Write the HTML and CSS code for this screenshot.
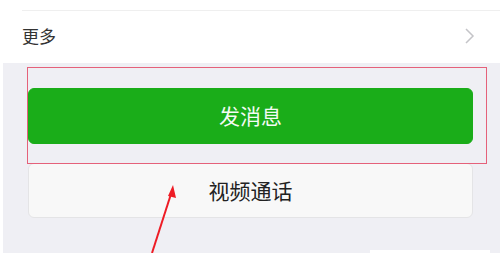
FILE: index.html
```html
<!DOCTYPE html>
<html lang="zh-CN">
<head>
    <meta charset="UTF-8">
    <meta name="viewport" content="width=device-width, initial-scale=1.0">
    <title>更多</title>
    <link rel="stylesheet" href="styles.css">
</head>
<body>
    <div class="page">
        <div class="list">
            <div class="list-top"></div>
            <div class="list-item">
                <span class="item-label">更多</span>
                <svg class="chevron" width="12" height="18" viewBox="0 0 12 18">
                    <polyline points="2,2 9,9 2,16" fill="none" stroke="#c4c4c8" stroke-width="1.5"/>
                </svg>
            </div>
        </div>

        <div class="actions">
            <button class="btn btn-primary">发消息</button>
            <button class="btn btn-default">视频通话</button>
            <div class="bottom-tab"></div>
        </div>

        <div class="highlight"></div>
        <svg class="arrow" width="500" height="253" viewBox="0 0 500 253">
            <line x1="152" y1="253" x2="171" y2="194" stroke="#ee1c25" stroke-width="2"/>
            <polygon points="173,185 176,198 168,196" fill="#ee1c25"/>
        </svg>
    </div>
</body>
</html>
```

FILE: styles.css
```css
* {
    margin: 0;
    padding: 0;
    box-sizing: border-box;
}

body {
    font-family: 'Noto Sans CJK SC', 'Noto Sans', sans-serif;
    background: white;
    width: 500px;
    height: 253px;
    overflow: hidden;
}

.page {
    position: relative;
    height: 253px;
    display: flex;
    flex-direction: column;
}

.list {
    background: white;
    height: 63px;
    padding-left: 22px;
}

.list-top {
    height: 11px;
    border-bottom: 1px solid #efefef;
}

.list-item {
    height: 51px;
    display: flex;
    align-items: center;
    justify-content: space-between;
    padding-right: 24px;
    padding-bottom: 2px;
}

.item-label {
    font-size: 17px;
    color: #333;
}

.chevron {
    display: block;
}

.actions {
    flex: 1;
    background: #efeff4;
    margin-left: 3px;
    padding: 25px 27px 0 25px;
    display: flex;
    flex-direction: column;
    gap: 19px;
    position: relative;
}

.btn {
    font-family: 'Noto Sans CJK SC', 'Noto Sans', sans-serif;
    font-size: 21px;
    border-radius: 6px;
    width: 100%;
    cursor: pointer;
}

.btn-primary {
    height: 56px;
    background: #1aad19;
    color: #f4fbf4;
    border: 1px solid #1aad19;
    padding-bottom: 3px;
}

.btn-default {
    height: 55px;
    background: #f8f8f8;
    color: #222;
    border: 1px solid #e4e4e6;
    padding-bottom: 2px;
}

.bottom-tab {
    position: absolute;
    left: 367px;
    right: 10px;
    bottom: 0;
    height: 3px;
    background: white;
}

.highlight {
    position: absolute;
    left: 27px;
    top: 67px;
    width: 460px;
    height: 97px;
    border: 1px solid #e5617a;
    pointer-events: none;
}

.arrow {
    position: absolute;
    left: 0;
    top: 0;
    pointer-events: none;
}
```
